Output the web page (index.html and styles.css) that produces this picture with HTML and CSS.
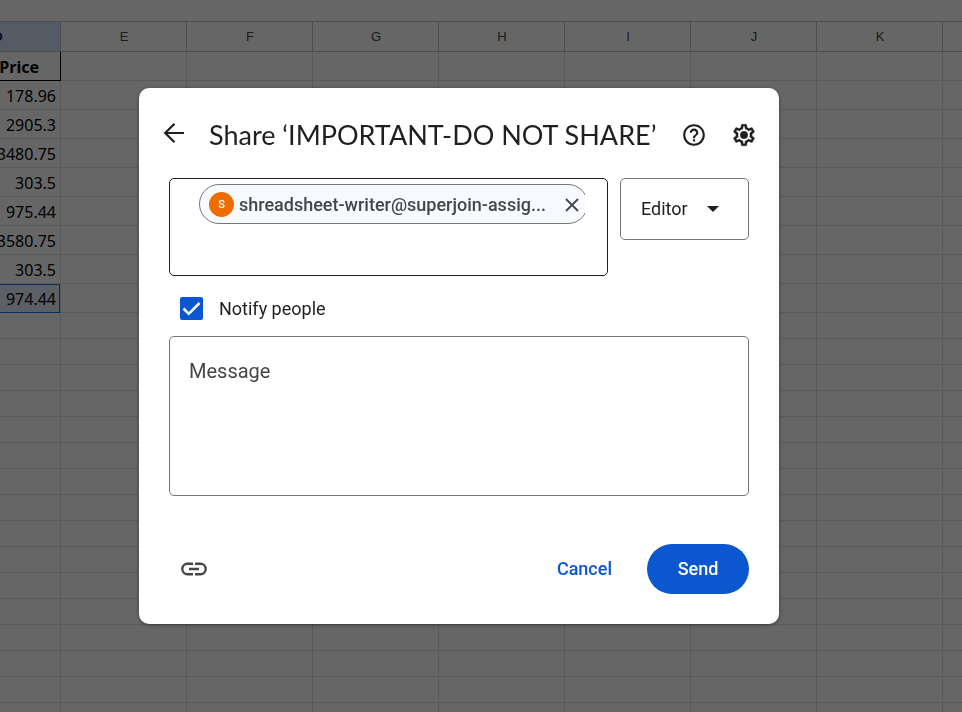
FILE: index.html
```html
<!DOCTYPE html>
<html lang="en">
<head>
<meta charset="utf-8">
<meta name="viewport" content="width=device-width, initial-scale=1">
<title>Share</title>
<link rel="stylesheet" href="styles.css">
</head>
<body>
<main class="sheet">
  <table class="grid">
    <thead>
      <tr><th class="selected">D</th><th>E</th><th>F</th><th>G</th><th>H</th><th>I</th><th>J</th><th>K</th><th></th></tr>
    </thead>
    <tbody>
      <tr class="data"><td class="heading">Price</td><td></td><td></td><td></td><td></td><td></td><td></td><td></td><td></td></tr>
      <tr class="data"><td>178.96</td><td></td><td></td><td></td><td></td><td></td><td></td><td></td><td></td></tr>
      <tr class="data"><td>2905.3</td><td></td><td></td><td></td><td></td><td></td><td></td><td></td><td></td></tr>
      <tr class="data"><td>3480.75</td><td></td><td></td><td></td><td></td><td></td><td></td><td></td><td></td></tr>
      <tr class="data"><td>303.5</td><td></td><td></td><td></td><td></td><td></td><td></td><td></td><td></td></tr>
      <tr class="data"><td>975.44</td><td></td><td></td><td></td><td></td><td></td><td></td><td></td><td></td></tr>
      <tr class="data"><td>3580.75</td><td></td><td></td><td></td><td></td><td></td><td></td><td></td><td></td></tr>
      <tr class="data"><td>303.5</td><td></td><td></td><td></td><td></td><td></td><td></td><td></td><td></td></tr>
      <tr class="data"><td class="active">974.44</td><td></td><td></td><td></td><td></td><td></td><td></td><td></td><td></td></tr>
      <tr><td></td><td></td><td></td><td></td><td></td><td></td><td></td><td></td><td></td></tr>
      <tr><td></td><td></td><td></td><td></td><td></td><td></td><td></td><td></td><td></td></tr>
      <tr><td></td><td></td><td></td><td></td><td></td><td></td><td></td><td></td><td></td></tr>
      <tr><td></td><td></td><td></td><td></td><td></td><td></td><td></td><td></td><td></td></tr>
      <tr><td></td><td></td><td></td><td></td><td></td><td></td><td></td><td></td><td></td></tr>
      <tr><td></td><td></td><td></td><td></td><td></td><td></td><td></td><td></td><td></td></tr>
      <tr><td></td><td></td><td></td><td></td><td></td><td></td><td></td><td></td><td></td></tr>
      <tr><td></td><td></td><td></td><td></td><td></td><td></td><td></td><td></td><td></td></tr>
      <tr><td></td><td></td><td></td><td></td><td></td><td></td><td></td><td></td><td></td></tr>
      <tr><td></td><td></td><td></td><td></td><td></td><td></td><td></td><td></td><td></td></tr>
      <tr><td></td><td></td><td></td><td></td><td></td><td></td><td></td><td></td><td></td></tr>
      <tr><td></td><td></td><td></td><td></td><td></td><td></td><td></td><td></td><td></td></tr>
      <tr><td></td><td></td><td></td><td></td><td></td><td></td><td></td><td></td><td></td></tr>
      <tr><td></td><td></td><td></td><td></td><td></td><td></td><td></td><td></td><td></td></tr>
      <tr><td></td><td></td><td></td><td></td><td></td><td></td><td></td><td></td><td></td></tr>
      <tr><td></td><td></td><td></td><td></td><td></td><td></td><td></td><td></td><td></td></tr>
    </tbody>
  </table>
</main>
<div class="scrim">
  <form class="dialog" role="dialog" aria-labelledby="share-title">
    <header class="dialog-header">
      <button class="icon-button back" type="button" aria-label="Back">
        <svg width="28" height="28" viewBox="0 0 28 28" fill="none" stroke="currentColor" stroke-width="2.2"><path d="M24 14H5.500M14.500 4.700 5.200 14l9.300 9.300"/></svg>
      </button>
      <h1 class="title" id="share-title">Share ‘IMPORTANT-DO NOT SHARE’</h1>
      <button class="icon-button" type="button" aria-label="Help">
        <svg width="26" height="26" viewBox="0 0 24 24" fill="currentColor"><path d="M11 18h2v-2h-2v2zm1-16C6.480 2 2 6.480 2 12s4.480 10 10 10 10-4.480 10-10S17.520 2 12 2zm0 18c-4.410 0-8-3.590-8-8s3.590-8 8-8 8 3.590 8 8-3.590 8-8 8zm0-14c-2.210 0-4 1.790-4 4h2c0-1.100.9-2 2-2s2 .9 2 2c0 2-3 1.750-3 5h2c0-2.250 3-2.500 3-5 0-2.210-1.790-4-4-4z"/></svg>
      </button>
      <button class="icon-button" type="button" aria-label="Settings">
        <svg width="26" height="26" viewBox="0 0 24 24" fill="currentColor" stroke="currentColor" stroke-width=".3"><path d="M19.43 12.98c.04-.32.07-.64.07-.98 0-.34-.03-.66-.07-.98l2.110-1.650c.19-.15.24-.42.12-.64l-2-3.460c-.09-.16-.26-.25-.44-.25-.06 0-.12.01-.17.03l-2.490 1c-.52-.4-1.080-.73-1.690-.98l-.38-2.650C14.460 2.180 14.250 2 14 2h-4c-.25 0-.46.18-.49.42l-.38 2.650c-.61.25-1.170.59-1.690.98l-2.490-1c-.06-.02-.12-.03-.18-.03-.17 0-.34.09-.43.25l-2 3.460c-.13.22-.07.49.12.64l2.110 1.650c-.04.32-.07.65-.07.98 0 .33.03.66.07.98l-2.110 1.650c-.19.15-.24.42-.12.64l2 3.460c.09.16.26.25.44.25.06 0 .12-.01.17-.03l2.490-1c.52.4 1.080.73 1.690.98l.38 2.650c.03.24.24.42.49.42h4c.25 0 .46-.18.49-.42l.38-2.650c.61-.25 1.170-.59 1.690-.98l2.490 1c.06.02.12.03.18.03.17 0 .34-.09.43-.25l2-3.460c.12-.22.07-.49-.12-.64l-2.110-1.650zm-1.980-1.710c.04.31.05.52.05.73 0 .21-.02.43-.05.73l-.14 1.130.89.7 1.080.84-.7 1.210-1.270-.51-1.040-.42-.9.68c-.43.32-.84.56-1.250.73l-1.060.43-.16 1.130-.2 1.350h-1.400l-.19-1.350-.16-1.130-1.060-.43c-.43-.18-.83-.41-1.230-.71l-.91-.7-1.060.43-1.270.51-.7-1.210 1.080-.84.89-.7-.14-1.130c-.03-.31-.05-.54-.05-.74s.02-.43.05-.73l.14-1.130-.89-.7-1.080-.84.7-1.210 1.270.51 1.040.42.9-.68c.43-.32.84-.56 1.250-.73l1.060-.43.16-1.130.2-1.350h1.390l.19 1.350.16 1.130 1.060.43c.43.18.83.41 1.230.71l.91.7 1.060-.43 1.270-.51.7 1.210-1.070.85-.89.7.14 1.130z"/><circle cx="12" cy="12" r="3.500"/></svg>
      </button>
    </header>
    <div class="dialog-body">
      <div class="people">
        <div class="recipients">
          <div class="chip-row">
            <div class="chip">
              <span class="avatar">S</span>
              <span class="email">shreadsheet-writer@superjoin-assig...</span>
              <button class="remove" type="button" aria-label="Remove recipient">
                <svg width="16" height="16" viewBox="0 0 16 16" fill="none" stroke="currentColor" stroke-width="1.800"><path d="M2 2l12 12M14 2 2 14"/></svg>
              </button>
            </div>
          </div>
          <input class="recipient-input" type="text" aria-label="Add people">
        </div>
        <div class="role">
          <select class="role-select" aria-label="Role">
            <option>Editor</option>
            <option>Commenter</option>
            <option>Viewer</option>
          </select>
          <svg class="role-arrow" width="12" height="6" viewBox="0 0 12 6" fill="currentColor" aria-hidden="true"><path d="M0 0h12L6 6z"/></svg>
        </div>
      </div>
      <div class="notify">
        <span class="check">
          <input class="checkbox" id="notify" type="checkbox" checked>
          <svg class="tick" width="23" height="23" viewBox="0 0 23 23" fill="none" stroke="#fff" stroke-width="2.500" aria-hidden="true"><path d="M3.500 11.500l5.300 5.300L19.500 6"/></svg>
        </span>
        <label for="notify">Notify people</label>
      </div>
      <textarea class="message" placeholder="Message" aria-label="Message"></textarea>
    </div>
    <footer class="dialog-footer">
      <button class="icon-button link" type="button" aria-label="Copy link">
        <svg width="26" height="14" viewBox="0 0 26 14" fill="none" stroke="currentColor" stroke-width="2.400"><path d="M12 1.800H6.500a5.200 5.200 0 0 0 0 10.400H12M14 1.800h5.500a5.200 5.200 0 0 1 0 10.400H14M8 7h10"/></svg>
      </button>
      <button class="button cancel" type="button">Cancel</button>
      <button class="button send" type="submit">Send</button>
    </footer>
  </form>
</div>
</body>
</html>
```
FILE: styles.css
```css
* {
  box-sizing: border-box;
}

body {
  margin: 0;
  height: 100vh;
  overflow: hidden;
  background: #fff;
  color: #1f1f1f;
  font-family: Roboto, "Liberation Sans", sans-serif;
}

button,
input,
select,
textarea {
  font: inherit;
  color: inherit;
}

button {
  padding: 0;
  border: 0;
  background: none;
  cursor: pointer;
}

svg {
  display: block;
}

/* Spreadsheet, scrolled part way through column D */
.sheet {
  height: 100vh;
  padding-top: 21px;
  overflow: hidden;
}

.grid {
  width: 1134px;
  margin-left: -65px;
  table-layout: fixed;
  border-collapse: separate;
  border-spacing: 0;
  border-top: 1px solid #c0c0c0;
}

.grid th,
.grid td {
  height: 26px;
  padding: 0 4px 0 0;
  border-right: 1px solid #e1e1e1;
  border-bottom: 1px solid #e1e1e1;
}

.grid th {
  height: 30px;
  padding: 0 0 1px 1px;
  border-color: #c0c0c0;
  color: #444;
  font: 13px "Liberation Sans", sans-serif;
}

.grid .selected {
  background: #d3e3fd;
  color: #041e49;
  font-weight: bold;
}

.grid .data td {
  height: 29px;
  padding-top: 2px;
  color: #000;
  font: 16px/26px "Noto Sans", sans-serif;
  text-align: right;
}

.grid .data .heading {
  padding-right: 21px;
  border-color: #000;
  font-weight: bold;
}

.grid .data .active {
  border-bottom-color: #1a73e8;
  background: #e6effd;
  box-shadow: inset -1px 1px #1a73e8;
}

/* Dialog */
.scrim {
  position: fixed;
  inset: 0;
  display: grid;
  place-items: center;
  padding-right: 44px;
  background: rgba(0, 0, 0, 0.6);
}

.dialog {
  width: 100%;
  max-width: 640px;
  padding: 22px 0 30px;
  border-radius: 10px;
  background: #fff;
  box-shadow: 0 1px 4px rgba(0, 0, 0, 0.4);
}

.dialog-header {
  display: flex;
  align-items: center;
  gap: 10px;
  height: 50px;
  margin-bottom: 18px;
  padding: 0 15px;
}

.icon-button {
  display: grid;
  place-items: center;
  flex: none;
  width: 40px;
  height: 40px;
}

.back {
  margin-right: 5px;
  padding-bottom: 4px;
}

.title {
  flex: 1;
  min-width: 0;
  margin: 0;
  font: 27px/36px Lato, sans-serif;
  white-space: nowrap;
}

.dialog-body {
  padding: 0 30px;
}

.people {
  display: flex;
  align-items: flex-start;
  gap: 12px;
}

.recipients {
  flex: 1;
  min-width: 0;
  height: 98px;
  padding: 5px 22px 5px 29px;
  border: 1px solid #1f1f1f;
  border-radius: 5px;
}

.chip-row {
  overflow: hidden;
}

.chip {
  display: flex;
  align-items: center;
  width: calc(100% + 3px);
  height: 40px;
  padding: 0 5px 0 9px;
  border: 1px solid #747775;
  border-radius: 20px;
  background: #f8faff;
  color: #444746;
}

.avatar {
  display: grid;
  place-items: center;
  width: 25px;
  height: 25px;
  margin-right: 5px;
  border-radius: 50%;
  background: #ef6c00;
  color: #fff;
  font-size: 11px;
  font-weight: 500;
}

.email {
  flex: 1;
  font-size: 18px;
  font-weight: 500;
  white-space: nowrap;
}

.remove {
  padding: 3px 2px 1px;
}

.recipient-input {
  width: 100%;
  height: 40px;
  border: 0;
  outline: 0;
  background: none;
}

.role {
  position: relative;
  width: 129px;
}

.role-select {
  width: 100%;
  height: 62px;
  padding: 0 20px 2px;
  border: 1px solid #747775;
  border-radius: 5px;
  background: #fff;
  font-size: 18px;
  appearance: none;
}

.role-arrow {
  position: absolute;
  top: 28px;
  right: 30px;
  pointer-events: none;
}

.notify {
  display: flex;
  align-items: center;
  gap: 16px;
  height: 60px;
  padding: 5px 11px 0;
  font-size: 18px;
}

.check {
  display: grid;
  flex: none;
}

.checkbox,
.tick {
  grid-area: 1 / 1;
}

.checkbox {
  appearance: none;
  width: 23px;
  height: 23px;
  margin: 0;
  border: 2px solid #444746;
  border-radius: 2px;
}

.checkbox:checked {
  border-color: #0b57d0;
  background: #0b57d0;
}

.tick {
  pointer-events: none;
}

.message {
  display: block;
  width: 100%;
  height: 160px;
  padding: 22px 19px;
  border: 1px solid #747775;
  border-radius: 5px;
  background: #fff;
  font-size: 20px;
  line-height: 24px;
  resize: none;
}

.message::placeholder {
  color: #444746;
  opacity: 1;
}

.dialog-footer {
  display: flex;
  align-items: center;
  gap: 5px;
  margin-top: 48px;
  padding: 0 30px 0 35px;
}

.link {
  margin-right: auto;
  color: #444746;
}

.button {
  height: 50px;
  padding: 0 30px 2px;
  border-radius: 25px;
  font-size: 18px;
  font-weight: 500;
}

.cancel {
  color: #0b57d0;
}

.send {
  min-width: 102px;
  background: #0b57d0;
  color: #fff;
}
```
